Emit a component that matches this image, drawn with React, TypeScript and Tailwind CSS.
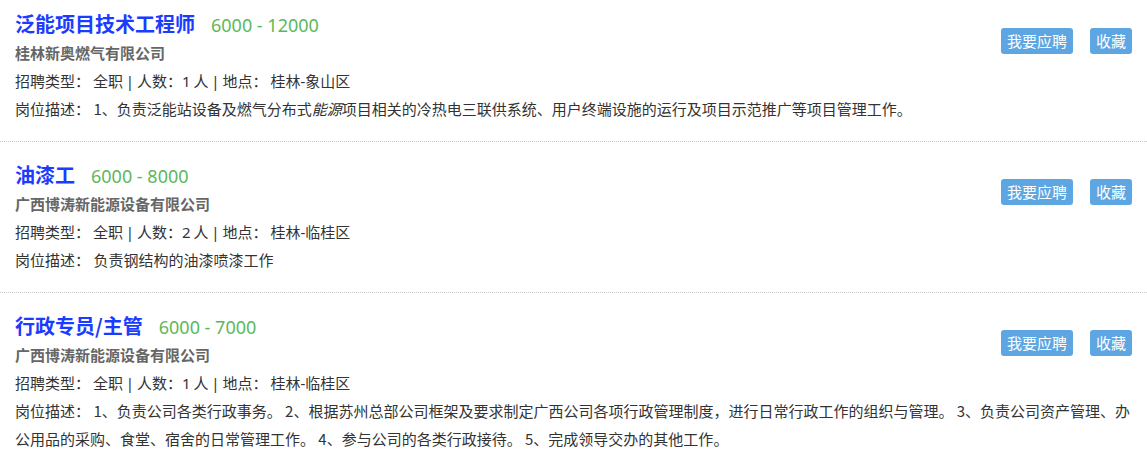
const jobs = [
  {
    id: 1,
    title: "泛能项目技术工程师",
    salary: "6000 - 12000",
    company: "桂林新奥燃气有限公司",
    count: 1,
    place: "桂林-象山区",
    desc: (
      <>
        1、负责泛能站设备及燃气分布式<em className="italic">能源</em>项目相关的冷热电三联供系统、用户终端设施的运行及项目示范推广等项目管理工作。
      </>
    ),
  },
  {
    id: 2,
    title: "油漆工",
    salary: "6000 - 8000",
    company: "广西博涛新能源设备有限公司",
    count: 2,
    place: "桂林-临桂区",
    desc: <>负责钢结构的油漆喷漆工作</>,
  },
  {
    id: 3,
    title: "行政专员/主管",
    salary: "6000 - 7000",
    company: "广西博涛新能源设备有限公司",
    count: 1,
    place: "桂林-临桂区",
    desc: (
      <>
        1、负责公司各类行政事务。 2、根据苏州总部公司框架及要求制定广西公司各项行政管理制度，进行日常行政工作的组织与管理。 3、负责公司资产管理、办公用品的采购、食堂、宿舍的日常管理工作。 4、参与公司的各类行政接待。 5、完成领导交办的其他工作。
      </>
    ),
  },
];

export default function App() {
  return (
    <div
      className="w-[1147px] min-h-[452px] bg-white text-[#333]"
      style={{ fontFamily: '"Noto Sans CJK SC", "Noto Sans", sans-serif' }}
    >
      {jobs.map((job, i) => (
        <div
          key={job.id}
          className={`pl-[15px] pr-[6px] pb-[18px] border-b border-dotted border-[#c8c8c8] ${
            i === 0 ? "pt-[9px]" : "pt-[18px]"
          }`}
        >
          {/* Buttons */}
          <div className="float-right mt-[19px] mr-[9px] flex gap-[17px]">
            <button className="h-[26px] px-[6px] rounded-[3px] bg-[#5ea6e1] text-white text-[15px] leading-[26px]">
              我要应聘
            </button>
            <button className="h-[26px] px-[6px] rounded-[3px] bg-[#5ea6e1] text-white text-[15px] leading-[26px]">
              收藏
            </button>
          </div>

          <div className="flex items-baseline h-[30px] leading-[30px]">
            <span className="text-[20px] font-bold text-[#1b3cff]">
              {job.title}
            </span>
            <span
              className="ml-[16px] text-[18px] text-[#5cb85c]"
              style={{ fontFamily: '"Noto Sans", sans-serif' }}
            >
              {job.salary}
            </span>
          </div>

          <p className="text-[15px] leading-[28px] font-bold text-[#666]">
            {job.company}
          </p>

          <p
            className="text-[15px] leading-[28px] [word-spacing:-1px]"
            style={{ fontFamily: '"Noto Sans", "Noto Sans CJK SC", sans-serif' }}
          >
            招聘类型：&nbsp;全职 | 人数：{job.count} 人 | 地点：&nbsp;{job.place}
          </p>

          <p className="text-[15px] leading-[28px]">
            岗位描述：&nbsp;{job.desc}
          </p>
        </div>
      ))}
    </div>
  );
}
